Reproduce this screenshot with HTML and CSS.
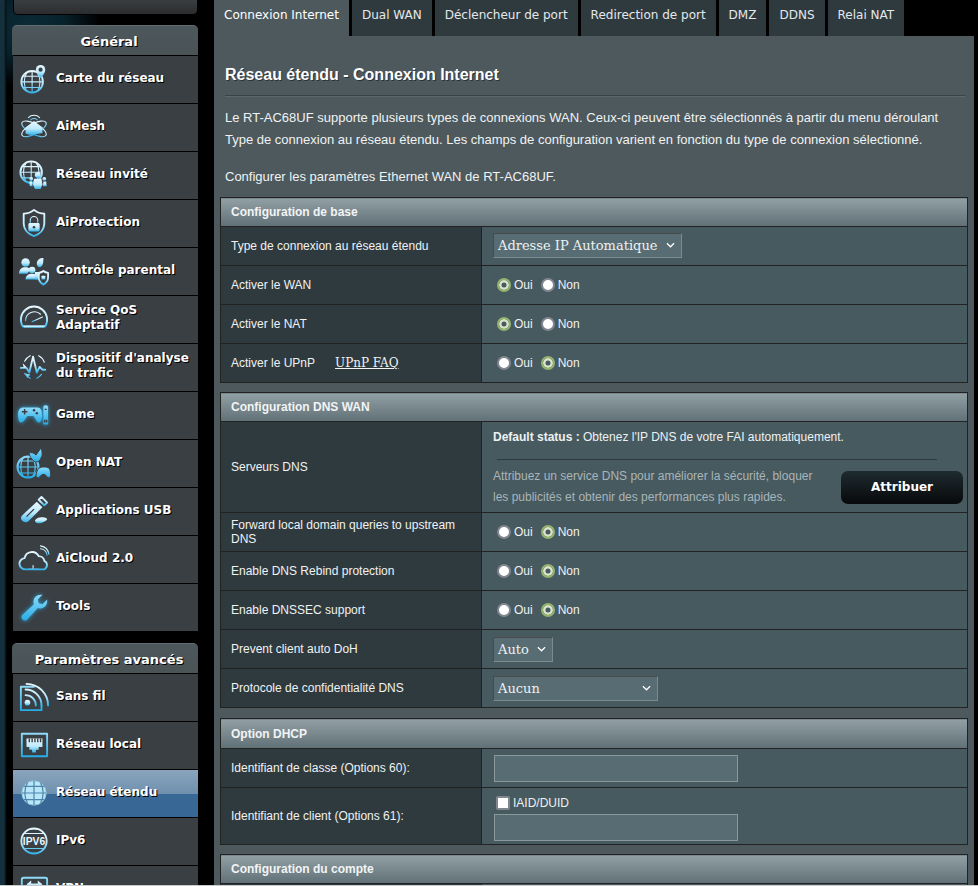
FILE: index.html
```html
<!DOCTYPE html>
<html lang="fr">
<head>
    <meta charset="UTF-8">
    <title>Réseau étendu - Connexion Internet</title>
    <link rel="stylesheet" href="styles.css">
</head>
<body>
    <svg class="defs" width="0" height="0">
        <defs>
            <linearGradient id="ic" x1="0" y1="0" x2="0" y2="1">
                <stop offset="0" stop-color="#e8f8ff"/>
                <stop offset="0.55" stop-color="#bfeafc"/>
                <stop offset="1" stop-color="#35b4ea"/>
            </linearGradient>
            <linearGradient id="cy" x1="0" y1="0" x2="0" y2="1">
                <stop offset="0" stop-color="#8fdcfa"/>
                <stop offset="1" stop-color="#27ace6"/>
            </linearGradient>
        </defs>
    </svg>
    <div class="page">
        <aside class="sidebar">
            <div class="top-box"></div>

            <div class="menu-title">Général</div>
            <ul class="menu">
                <li>
                    <svg class="icon" viewBox="0 0 32 32"><circle cx="14" cy="19" r="11.500" class="line"/><path class="thin" d="M3 19h22M14 8v22M8 9.500c-3 6-3 13 0 19M20 9.500c3 6 3 13 0 19M5 13h18M5 25h18"/><path class="fill" d="M23 1a5 5 0 0 1 5 5c0 4-5 9-5 9s-5-5-5-9a5 5 0 0 1 5-5z"/><circle cx="23" cy="6" r="2.200" fill="#3a3f43"/></svg>
                    <span>Carte du réseau</span>
                </li>
                <li>
                    <svg class="icon" viewBox="0 0 32 32"><ellipse cx="16" cy="18" rx="14.500" ry="5.500" class="thin" transform="rotate(28 16 18)"/><ellipse cx="16" cy="18" rx="14.500" ry="5.500" class="thin" transform="rotate(-28 16 18)"/><path class="fill" d="M16 9.500l9 7v6c-3 1-6 .5-9 1.500s-6 .5-9-1v-6.500z"/><path class="thin" d="M10 6a8.500 8.500 0 0 1 12 0M12.500 8.500a5 5 0 0 1 7 0"/></svg>
                    <span>AiMesh</span>
                </li>
                <li>
                    <svg class="icon" viewBox="0 0 32 32"><circle cx="13" cy="13" r="11.500" class="line"/><path class="thin" d="M2 13h22M13 2v22M7 4c-3 6-3 12 0 18M19 4c3 6 3 12 0 18M4 7h18M4 19h10"/><circle cx="20" cy="16" r="3.200" class="fill"/><path class="fill" d="M16 20h8l1 6-2 5h-6l-2-5z"/><circle cx="13" cy="20" r="2" class="fill"/><circle cx="27" cy="20" r="2" class="fill"/><path class="fill" d="M11 23h3l.5 5h-3zM26 23h3l.5 5h-4z"/></svg>
                    <span>Réseau invité</span>
                </li>
                <li>
                    <svg class="icon" viewBox="0 0 32 32"><path class="line" d="M16 2c3 2.500 7 4 11 4v10c0 7-5 12-11 14-6-2-11-7-11-14V6c4 0 8-1.500 11-4z"/><path class="thin" d="M12 16v-3a4 4 0 0 1 8 0v3"/><rect x="10" y="16" width="12" height="9" rx="1.500" class="fill"/><circle cx="16" cy="20.500" r="1.400" fill="#3a3f43"/></svg>
                    <span>AiProtection</span>
                </li>
                <li>
                    <svg class="icon wide" viewBox="0 0 34 32"><circle cx="8" cy="7" r="4.500" class="fill"/><path class="fill" d="M1 19c0-5 3-7 7-7 2 0 4 .5 5 2l-3 5z"/><path class="fill" d="M20 8c0-4 3-6 7-6 0 4 0 9-4 10-2 0-3-2-3-4z"/><circle cx="15" cy="15" r="3.500" class="fill"/><path class="fill" d="M8 25c0-4 3-6 7-6s6 2 6 5v1z"/><path class="fill" d="M18 17h6l-3 8h-3z"/><path class="line" d="M27 16c1.500 1.200 3.200 1.800 5 2v5c0 3.500-2.500 6-5 7.500-2.500-1.500-5-4-5-7.500v-5c1.800-.2 3.500-.8 5-2z"/><rect x="25" y="21" width="4" height="4" rx=".5" class="fill"/></svg>
                    <span>Contrôle parental</span>
                </li>
                <li class="two">
                    <svg class="icon" viewBox="0 0 32 32"><path class="line" d="M4 25a14 14 0 1 1 24 0z"/><path class="thin" d="M7 19a9.500 9.500 0 0 1 16-7"/><path class="thin" d="M14 20l11-5"/><path class="fill" d="M4 24h24l-1.500 2.500h-21z"/></svg>
                    <span>Service QoS<br>Adaptatif</span>
                </li>
                <li class="two">
                    <svg class="icon" viewBox="0 0 32 32"><path class="line" d="M2 18h6l3 5 4-17 4 17 3-6 3 3h3"/><path class="thin" d="M6 11a12 12 0 0 1 6-6M21 5a12 12 0 0 1 6 7M6 24a12 12 0 0 0 6 5M19 29a12 12 0 0 0 5-4"/><path class="fill" d="M4 13l4 4-3 1zM7 24l5 1-3 4z"/></svg>
                    <span>Dispositif d'analyse<br>du trafic</span>
                </li>
                <li>
                    <svg class="icon wide halo" viewBox="0 0 34 32"><path class="cyan" d="M5 8h16c3 0 4.500 3 4.500 8 0 4-1 8-3 8-3 0-4-5-6-7H10c-2 2-4 7-7 7-2 0-3-4-3-8 0-5 2-8 5-8z"/><path class="cyan" d="M27 7c1-2 4-2 5 0v19h-5z"/><path class="dark" d="M4 12.500h6M7 9.500v6M28.500 10h2M28.500 21v3M30.500 21v3"/><circle cx="17" cy="11" r="1.300" fill="#3a3f43"/><circle cx="20" cy="14" r="1.300" fill="#3a3f43"/></svg>
                    <span>Game</span>
                </li>
                <li>
                    <svg class="icon nat" viewBox="0 0 34 32"><circle cx="11" cy="20" r="10.500" class="cyline"/><path class="cythin" d="M.5 20h21M11 9.500v21M6 11c-3 5-3 13 0 18M16 11c3 5 3 13 0 18M2.500 14h17M2.500 26h17"/><path class="cyan outlined" d="M12 6c3-1 5 0 7 2l5-7c1 3 2 7 0 10-1 3-3 4-5 4-3-1-6-4-7-9z"/><path class="cyan outlined" d="M22 21c2-1.500 8-1.500 10 0 1.500 2 2 6 1.500 9l-2.500 1-3-3.500h-3L21.500 31 19 30c0-4 1-7 3-9z"/></svg>
                    <span>Open NAT</span>
                </li>
                <li>
                    <svg class="icon" viewBox="0 0 32 32"><path class="fill" d="M3 21L19 6l6 6-15 15c-2 1.500-5 1-6.500-.5S1.500 23 3 21z"/><path class="line" d="M21 4l3-3 6 6-3 3z"/><path class="dark" d="M8 22l8-8"/><path class="fill" d="M17 26c2-3 6-4 10-3 2 .5 3 1 3 2-2 2-5 4-9 4-2 0-4-1-4-3z"/></svg>
                    <span>Applications USB</span>
                </li>
                <li>
                    <svg class="icon wide" viewBox="0 0 34 32"><path class="line" d="M8 27a6 6 0 0 1-1-12 8 8 0 0 1 15-2 6 6 0 0 1 6 5 5 5 0 0 1 0 9z"/><path class="thin" d="M24 5a8 8 0 0 1 7 7M24 2a11 11 0 0 1 9 9"/><path class="thin" d="M11 27h11M16 23v4"/></svg>
                    <span>AiCloud 2.0</span>
                </li>
                <li>
                    <svg class="icon halo" viewBox="0 0 32 32"><path class="cyan" d="M3 25L16 13c-2-5 2-11 9-10l-5 5 1 4 4 1 5-5c1 7-5 11-10 9L8 30c-2 1-4 0-5-2-.5-1-.5-2 0-3z"/></svg>
                    <span>Tools</span>
                </li>
            </ul>

            <div class="menu-title second">Paramètres avancés</div>
            <ul class="menu">
                <li>
                    <svg class="icon" viewBox="0 0 32 32"><path class="cyline" d="M16 5H2v25h22v-5"/><circle cx="9" cy="22" r="3" class="fill"/><path class="line" d="M7 14a11 11 0 0 1 11 11M7 8a17 17 0 0 1 17 17M8 2a23 23 0 0 1 23 23"/></svg>
                    <span>Sans fil</span>
                </li>
                <li>
                    <svg class="icon" viewBox="0 0 32 32"><rect x="3" y="4" width="27" height="24" class="cyline"/><path class="fill" d="M8 9h17v9h-4v3h-3v3h-4v-3h-3v-3H8z"/><path class="dark" d="M11 9v4M14 9v4M17 9v4M20 9v4M23 9v4"/></svg>
                    <span>Réseau local</span>
                </li>
                <li class="active">
                    <svg class="icon" viewBox="0 0 32 32"><circle cx="16" cy="16" r="13" class="glow"/><path class="grid" d="M3 16h26M16 3v26M9 5c-3.500 7-3.500 15 0 22M23 5c3.500 7 3.500 15 0 22M5 9h22M5 23h22"/></svg>
                    <span>Réseau étendu</span>
                </li>
                <li>
                    <svg class="icon" viewBox="0 0 32 32"><circle cx="16" cy="16" r="13.500" class="line"/><path class="thin" d="M5 8h22M5 24h22M10 4c3-1 9-1 12 0M10 28c3 1 9 1 12 0"/><text x="16" y="20" class="icon-text">IPV6</text></svg>
                    <span>IPv6</span>
                </li>
                <li>
                    <svg class="icon" viewBox="0 0 32 32"><rect x="3" y="4" width="27" height="24" rx="2" class="cyline"/><path class="fill" d="M8 11l5-4v3h7V7l5 4-5 4v-3h-7v3z"/></svg>
                    <span>VPN</span>
                </li>
            </ul>
        </aside>

        <div class="main">
            <nav class="tabs">
                <a class="tab current">Connexion Internet</a>
                <a class="tab">Dual WAN</a>
                <a class="tab">Déclencheur de port</a>
                <a class="tab">Redirection de port</a>
                <a class="tab">DMZ</a>
                <a class="tab">DDNS</a>
                <a class="tab">Relai NAT</a>
            </nav>

            <div class="content">
                <h1 class="title">Réseau étendu - Connexion Internet</h1>
                <p class="intro">Le RT-AC68UF supporte plusieurs types de connexions WAN. Ceux-ci peuvent être sélectionnés à partir du menu déroulant<br>Type de connexion au réseau étendu. Les champs de configuration varient en fonction du type de connexion sélectionné.</p>
                <p class="intro sub">Configurer les paramètres Ethernet WAN de RT-AC68UF.</p>

                <table class="form">
                    <colgroup><col class="label-col"><col></colgroup>
                    <thead><tr><td colspan="2">Configuration de base</td></tr></thead>
                    <tbody>
                        <tr>
                            <th>Type de connexion au réseau étendu</th>
                            <td><div class="select w-auto-ip">Adresse IP Automatique<svg viewBox="0 0 10 6"><path d="M1 1l4 4 4-4"/></svg></div></td>
                        </tr>
                        <tr>
                            <th>Activer le WAN</th>
                            <td><div class="radios"><i class="radio on"></i><span>Oui</span><i class="radio"></i><span>Non</span></div></td>
                        </tr>
                        <tr>
                            <th>Activer le NAT</th>
                            <td><div class="radios"><i class="radio on"></i><span>Oui</span><i class="radio"></i><span>Non</span></div></td>
                        </tr>
                        <tr>
                            <th>Activer le UPnP<a class="faq">UPnP FAQ</a></th>
                            <td><div class="radios"><i class="radio"></i><span>Oui</span><i class="radio on"></i><span>Non</span></div></td>
                        </tr>
                    </tbody>
                </table>

                <table class="form dns-table">
                    <colgroup><col class="label-col"><col></colgroup>
                    <thead><tr><td colspan="2">Configuration DNS WAN</td></tr></thead>
                    <tbody>
                        <tr>
                            <th>Serveurs DNS</th>
                            <td class="dns">
                                <div class="dns-status"><b>Default status :</b> Obtenez l'IP DNS de votre FAI automatiquement.</div>
                                <div class="dns-rule"></div>
                                <div class="dns-row">
                                    <div class="dns-hint">Attribuez un service DNS pour améliorer la sécurité, bloquer<br>les publicités et obtenir des performances plus rapides.</div>
                                    <a class="assign">Attribuer</a>
                                </div>
                            </td>
                        </tr>
                        <tr>
                            <th>Forward local domain queries to upstream DNS</th>
                            <td><div class="radios"><i class="radio"></i><span>Oui</span><i class="radio on"></i><span>Non</span></div></td>
                        </tr>
                        <tr>
                            <th>Enable DNS Rebind protection</th>
                            <td><div class="radios"><i class="radio"></i><span>Oui</span><i class="radio on"></i><span>Non</span></div></td>
                        </tr>
                        <tr>
                            <th>Enable DNSSEC support</th>
                            <td><div class="radios"><i class="radio"></i><span>Oui</span><i class="radio on"></i><span>Non</span></div></td>
                        </tr>
                        <tr>
                            <th>Prevent client auto DoH</th>
                            <td><div class="select w-doh">Auto<svg viewBox="0 0 10 6"><path d="M1 1l4 4 4-4"/></svg></div></td>
                        </tr>
                        <tr>
                            <th>Protocole de confidentialité DNS</th>
                            <td><div class="select w-dot">Aucun<svg viewBox="0 0 10 6"><path d="M1 1l4 4 4-4"/></svg></div></td>
                        </tr>
                    </tbody>
                </table>

                <table class="form dhcp-table">
                    <colgroup><col class="label-col"><col></colgroup>
                    <thead><tr><td colspan="2">Option DHCP</td></tr></thead>
                    <tbody>
                        <tr>
                            <th>Identifiant de classe (Options 60):</th>
                            <td><div class="input"></div></td>
                        </tr>
                        <tr class="client">
                            <th>Identifiant de client (Options 61):</th>
                            <td>
                                <div class="check-row"><i class="check"></i><span>IAID/DUID</span></div>
                                <div class="input"></div>
                            </td>
                        </tr>
                    </tbody>
                </table>

                <table class="form">
                    <colgroup><col class="label-col"><col></colgroup>
                    <thead><tr><td colspan="2">Configuration du compte</td></tr></thead>
                    <tbody>
                        <tr><th></th><td></td></tr>
                    </tbody>
                </table>
            </div>
        </div>
    </div>
</body>
</html>
```

FILE: styles.css
```css
* {
    margin: 0;
    padding: 0;
    box-sizing: border-box;
}

html, body {
    width: 100%;
    height: 100%;
    overflow: hidden;
}

body {
    background: #c9cbcc;
    font-family: "Liberation Sans", Arial, sans-serif;
    color: #fff;
}

.defs {
    display: block;
    height: 0;
}

.page {
    display: flex;
    height: 885px;
    overflow: hidden;
    background:
        linear-gradient(to right, #14303c 0, #14303c 4px, #050d11 6px, transparent 7px),
        radial-gradient(ellipse 70px 60px at 30px 28px, #0a2b38 0, #08222c 50%, transparent 100%),
        #000;
    background-repeat: no-repeat;
}

/* left menu */
.sidebar {
    width: 214px;
    flex-shrink: 0;
    padding-left: 12px;
    padding-right: 16px;
    font-family: "DejaVu Sans", sans-serif;
}

.top-box {
    height: 15px;
    margin-left: 1px;
    background: linear-gradient(to bottom, #3a3e41, #2b2c2e);
    border: 1px solid #000;
    border-top: 0;
    border-radius: 0 0 5px 5px;
    margin-bottom: 10px;
}

.menu-title {
    height: 30px;
    padding-left: 8px;
    border-radius: 5px 5px 0 0;
    background: linear-gradient(to bottom, #4d585c, #4a5356);
    border-top: 1px solid #636c70;
    font-size: 13px;
    font-weight: bold;
    line-height: 32px;
    text-align: center;
    text-shadow: 1px 1px 0 #000;
}

.menu-title.second {
    margin-top: 12px;
}

.menu {
    list-style: none;
    margin-left: 1px;
}

.menu li {
    height: 48px;
    display: flex;
    align-items: center;
    padding-bottom: 2px;
    background: #3a3f43;
    border-top: 1px solid #000;
    font-size: 12px;
    font-weight: bold;
    line-height: 15px;
    text-shadow: 1px 1px 0 #000;
}

.menu li.two {
    padding-bottom: 4px;
}

.menu li.active {
    background: linear-gradient(to bottom, #8aa5bd 0, #6f90ae 50%, #3a6896 52%, #386795 100%);
}

.icon {
    width: 30px;
    height: 30px;
    margin-left: 6px;
    margin-right: 7px;
    flex-shrink: 0;
    overflow: visible;
}

.icon.wide {
    width: 32px;
    margin-left: 5px;
    margin-right: 6px;
}

.icon.nat {
    width: 34px;
    height: 32px;
    margin-left: 4px;
    margin-right: 5px;
}

.icon.halo {
    filter: drop-shadow(0 0 2px #2aa7df);
}

.icon .line, .icon .thin, .icon .cyline, .icon .cythin {
    fill: none;
    stroke: url(#ic);
    stroke-linecap: round;
    stroke-linejoin: round;
}

.icon .cyline, .icon .cythin {
    stroke: url(#cy);
}

.icon .line, .icon .cyline {
    stroke-width: 2;
}

.icon .thin, .icon .cythin {
    stroke-width: 1.200;
}

.icon .fill {
    fill: url(#ic);
}

.icon .cyan {
    fill: url(#cy);
}

.icon .outlined {
    stroke: #3a3f43;
    stroke-width: 1;
}

.icon .dark {
    fill: none;
    stroke: #3a3f43;
    stroke-width: 1.500;
}

.icon .glow {
    fill: #b9e6f8;
    stroke: #8fc5dc;
    stroke-width: 1;
}

.icon .grid {
    fill: none;
    stroke: #4f86ab;
    stroke-width: 1.300;
}

.icon-text {
    font-family: "Liberation Sans", sans-serif;
    font-size: 11px;
    font-weight: bold;
    text-anchor: middle;
    fill: #e8f8ff;
    text-shadow: none;
}

/* tabs */
.main {
    width: 760px;
    flex-shrink: 0;
}

.tabs {
    display: flex;
    gap: 3px;
    height: 36px;
}

.tab {
    padding: 0 10px;
    background: #2f3a3f;
    font-family: "DejaVu Sans", sans-serif;
    font-size: 12px;
    line-height: 30px;
    color: #e4e8ea;
}

.tab.current {
    background: #4d595d;
    color: #fff;
}

.content {
    background: #4d595d;
    height: 850px;
    padding: 30px 6px 0;
}

.title {
    margin-left: 5px;
    margin-right: 3px;
    font-size: 16px;
    font-weight: bold;
    line-height: 17px;
    padding-bottom: 12px;
    border-bottom: 1px solid #38444a;
    box-shadow: 0 1px 0 #5c686c;
    text-shadow: 1px 1px 0 #2a3236;
}

.intro {
    margin: 11px 0 0 5px;
    font-size: 13px;
    line-height: 22px;
    color: #f0f2f3;
}

.intro.sub {
    margin-top: 15px;
}

/* form tables */
.form {
    width: 748px;
    border-collapse: collapse;
    table-layout: fixed;
    margin-bottom: 9px;
    border: 1px solid #222;
    font-size: 12px;
}

.form.dns-table {
    margin-bottom: 10px;
}

.intro.sub + .form {
    margin-top: 9px;
}

.label-col {
    width: 261px;
}

.form thead td {
    height: 29px;
    padding: 0 10px;
    background: linear-gradient(to bottom, #92a0a5, #5f7076);
    border: 1px solid #222;
    font-weight: bold;
    color: #f2f4f5;
}

.form.dhcp-table thead td {
    height: 30px;
}

.form th {
    height: 39px;
    padding: 0 10px;
    background: #2f3a3e;
    border: 1px solid #222;
    font-weight: normal;
    text-align: left;
    line-height: 14px;
    color: #f0f2f3;
}

.form tbody td {
    padding: 0 11px;
    background: #475a5f;
    border: 1px solid #222;
}

.faq {
    margin-left: 20px;
    font-family: "DejaVu Serif", serif;
    font-size: 12px;
    text-decoration: underline;
}

.select {
    display: flex;
    align-items: center;
    justify-content: space-between;
    height: 25px;
    padding: 0 6px 0 4px;
    background: #576d73;
    border: 1px solid;
    border-color: #4a4a4a #7d8a8e #7d8a8e #4a4a4a;
    font-family: "DejaVu Serif", serif;
    font-size: 13px;
    color: #eef1f2;
}

.select svg {
    width: 9px;
    height: 6px;
    fill: none;
    stroke: #fff;
    stroke-width: 1.400;
}

.w-auto-ip {
    width: 189px;
    margin: -1px 0 1px;
}
.w-doh { width: 60px; }
.w-dot { width: 165px; }

.radios, .check-row {
    display: flex;
    align-items: center;
    font-size: 12px;
    color: #eef1f2;
}

.radios {
    padding-left: 4px;
}

.radios span {
    margin: 0 8px 0 3px;
}

.radio {
    width: 14px;
    height: 14px;
    border-radius: 50%;
    background: #fff;
    border: 2px solid #82878f;
}

.radio.on {
    background: #475a5f;
    border: 2.500px solid #95b36e;
    box-shadow: inset 0 0 0 2.500px #d9e4cb;
}

.form tbody td.dns {
    vertical-align: top;
    padding-bottom: 4px;
    font-size: 12px;
    color: #eef1f2;
}

.dns-status {
    margin-top: 8px;
    line-height: 15px;
}

.dns-rule {
    height: 1px;
    margin: 14px 19px 6px 4px;
    background: #2f3a3e;
}

.dns-row {
    display: flex;
    justify-content: space-between;
    align-items: center;
}

.dns-hint {
    line-height: 21px;
    color: #a9b5b9;
}

.assign {
    width: 122px;
    height: 33px;
    margin-right: -7px;
    border-radius: 7px;
    background: linear-gradient(to bottom, #1e2b30, #08090a);
    font-family: "DejaVu Sans", sans-serif;
    font-size: 12px;
    font-weight: bold;
    line-height: 33px;
    text-align: center;
    color: #fff;
}

.input {
    width: 244px;
    height: 27px;
    margin-left: 1px;
    background: #576d73;
    border: 1px solid #8a979b;
}

.form tr.client th {
    height: 57px;
}

.form tr.client td {
    vertical-align: top;
}

.check-row {
    margin: 8px 0 4px 3px;
    height: 14px;
}

.check {
    width: 14px;
    height: 14px;
    margin-right: 3px;
    background: #fff;
    border: 2px solid #82878f;
    border-radius: 2px;
}
```
